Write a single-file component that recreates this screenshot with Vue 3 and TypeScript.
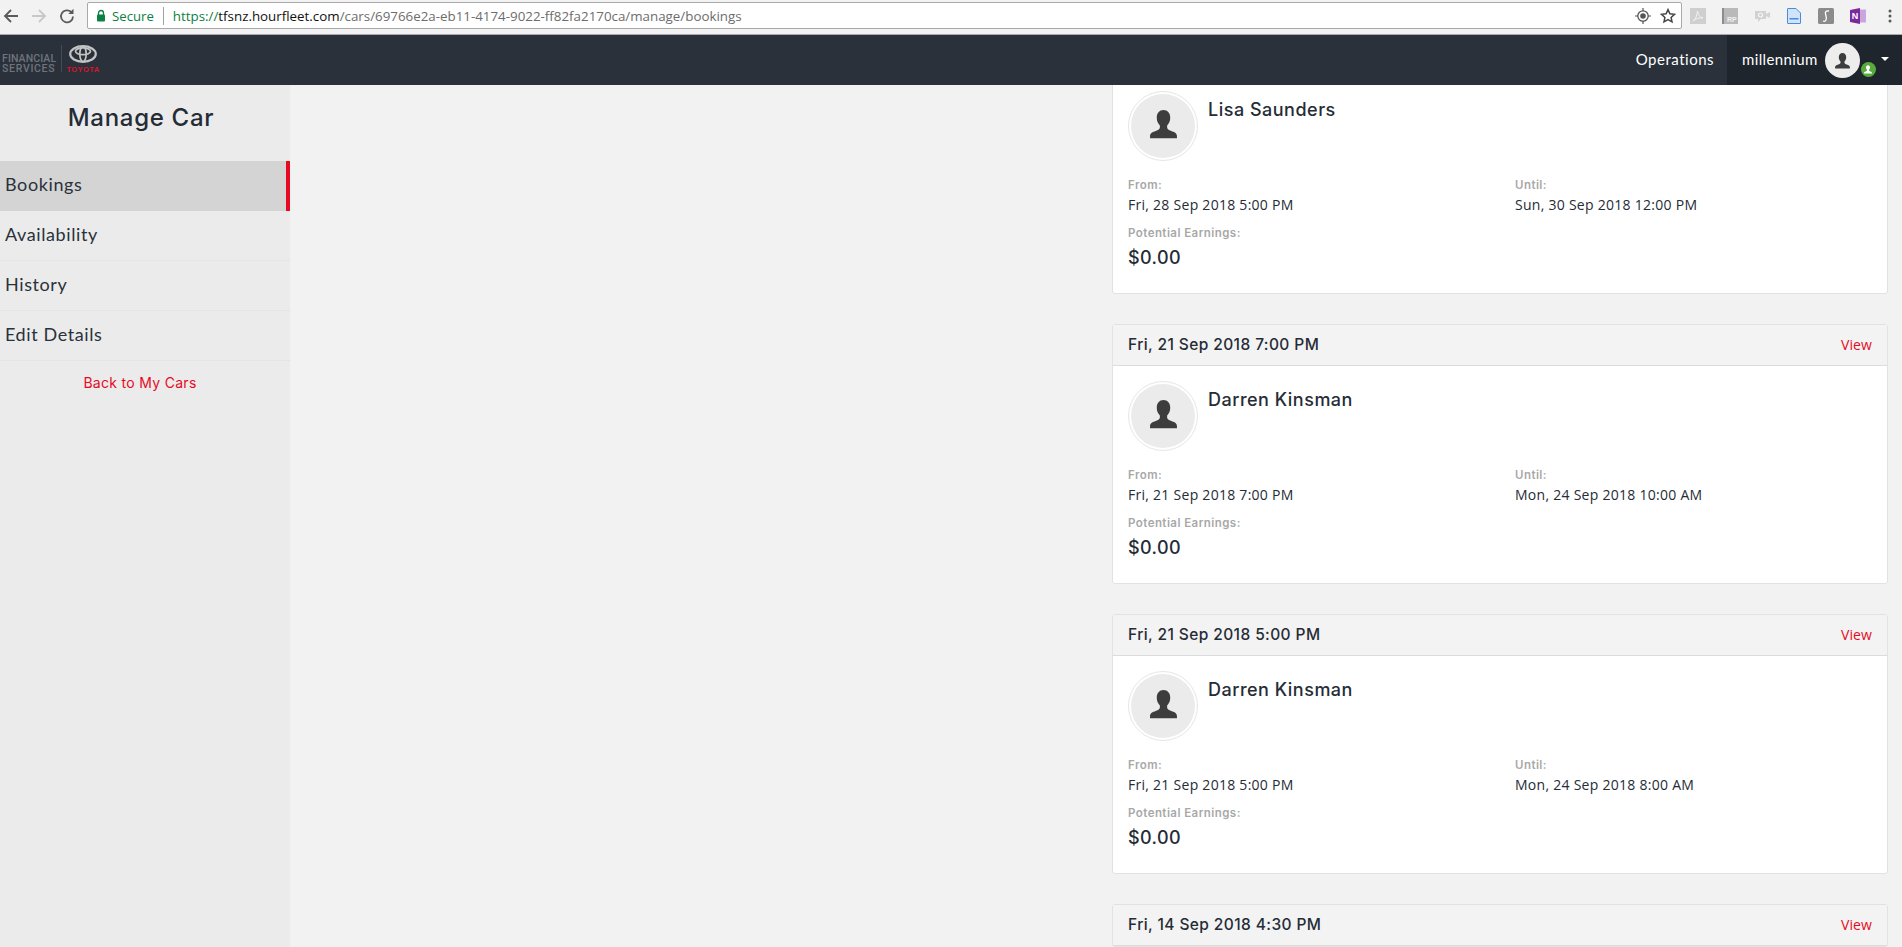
<script setup lang="ts">
interface Booking {
  id: number
  header?: string
  name?: string
  from?: string
  until?: string
}

const menu: string[] = ['Bookings', 'Availability', 'History', 'Edit Details']

const bookings: Booking[] = [
  { id: 1, name: 'Lisa Saunders', from: 'Fri, 28 Sep 2018 5:00 PM', until: 'Sun, 30 Sep 2018 12:00 PM' },
  { id: 2, header: 'Fri, 21 Sep 2018 7:00 PM', name: 'Darren Kinsman', from: 'Fri, 21 Sep 2018 7:00 PM', until: 'Mon, 24 Sep 2018 10:00 AM' },
  { id: 3, header: 'Fri, 21 Sep 2018 5:00 PM', name: 'Darren Kinsman', from: 'Fri, 21 Sep 2018 5:00 PM', until: 'Mon, 24 Sep 2018 8:00 AM' },
  { id: 4, header: 'Fri, 14 Sep 2018 4:30 PM' }
]

const personPath = 'M13 0c4 0 6.5 3 6.5 7.5 0 3-1 5.5-3 7.5v2c0 1.5 1.5 2.5 4 3.3 3 1 5.5 2 5.5 5v2H0v-2c0-3 2.5-4 5.5-5 2.5-.8 4-1.8 4-3.3v-2c-2-2-3-4.5-3-7.5C6.5 3 9 0 13 0z'
</script>

<template>
  <div class="page">
    <header class="chrome">
      <div class="nav-buttons">
        <svg class="ic" viewBox="0 0 16 16"><path d="M15 8H2M8 2L2 8l6 6" fill="none" stroke="#5a5a5a" stroke-width="1.8" /></svg>
        <svg class="ic" viewBox="0 0 16 16"><path d="M1 8h13M8 2l6 6-6 6" fill="none" stroke="#c8c8c8" stroke-width="1.8" /></svg>
        <svg class="ic" viewBox="0 0 16 16"><path d="M14 8.500a6 6 0 1 1-1.800-4.500" fill="none" stroke="#5a5a5a" stroke-width="1.800" /><path d="M14.500 .8v5.200H9.300z" fill="#5a5a5a" /></svg>
      </div>
      <div class="omnibox">
        <svg class="lock" viewBox="0 0 10 13"><path d="M2.500 6V4a2.500 2.500 0 0 1 5 0v2" fill="none" stroke="#0b8043" stroke-width="1.300" /><rect x="1" y="5.500" width="8" height="7" rx="1" fill="#0b8043" /></svg>
        <span class="secure">Secure</span>
        <span class="omni-divider"></span>
        <span class="url"><span class="scheme">https://</span><span class="host">tfsnz.hourfleet.com</span>/cars/69766e2a-eb11-4174-9022-ff82fa2170ca/manage/bookings</span>
        <span class="omni-actions">
          <svg class="ic" viewBox="0 0 16 16"><circle cx="8" cy="8" r="5.200" fill="none" stroke="#555" stroke-width="1.300" /><circle cx="8" cy="8" r="2.800" fill="#555" /><path d="M8 0v3M8 13v3M0 8h3M13 8h3" stroke="#555" stroke-width="1.200" /></svg>
          <svg class="ic" viewBox="0 0 16 16"><path d="M8 1.600l1.900 4.200 4.600.5-3.400 3.100.9 4.500L8 11.700l-4 2.200.9-4.500L1.500 6.300l4.600-.5z" fill="none" stroke="#444" stroke-width="1.500" /></svg>
        </span>
      </div>
      <div class="extensions">
        <svg class="ext" viewBox="0 0 16 16"><rect width="16" height="16" fill="#cfcfcf" /><path d="M3 13c3-2 4-6 4.500-10 .5 4 2 6 5.500 7-4-.5-7 .5-10 3z" fill="none" stroke="#f2f2f2" stroke-width="1" /></svg>
        <svg class="ext" viewBox="0 0 16 16"><rect width="16" height="16" fill="#b9b9b9" /><rect width="2" height="16" fill="#8d8d8d" /><text x="5" y="14" class="ext-text">RP</text></svg>
        <svg class="ext" viewBox="0 0 16 16"><path d="M1 3h11v8H7l-3 3v-3H1z" fill="#d2d2d2" /><path d="M12 6l4-2v6l-4-2z" fill="#d2d2d2" /><circle cx="6.500" cy="7" r="2" fill="none" stroke="#f6f6f6" stroke-width="1.200" /></svg>
        <svg class="ext" viewBox="0 0 16 16"><path d="M2 .5h8l4.500 4.500v10a.5.5 0 0 1-.5.5H2a.5.5 0 0 1-.5-.5V1a.5.5 0 0 1 .5-.5z" fill="#cfe3fa" stroke="#4a8ad8" /><rect x="3.500" y="10" width="9" height="1.500" fill="#4a8ad8" /></svg>
        <svg class="ext" viewBox="0 0 16 16"><rect width="16" height="16" rx="1.500" fill="#8b8b8b" /><path d="M11 3C8 2.500 7 4 7.500 6s1.500 4 .5 6-2 1.500-3 1" fill="none" stroke="#fff" stroke-width="1.300" /></svg>
        <svg class="ext" viewBox="0 0 16 16"><rect x="6" y="1.500" width="10" height="13" fill="#c9a6de" /><path d="M0 2l10-2v16L0 14z" fill="#7b2a9e" /><text x="1.800" y="11" class="ext-n">N</text></svg>
        <svg class="kebab" viewBox="0 0 4 16"><circle cx="2" cy="3" r="1.500" fill="#5a5a5a" /><circle cx="2" cy="8" r="1.500" fill="#5a5a5a" /><circle cx="2" cy="13" r="1.500" fill="#5a5a5a" /></svg>
      </div>
    </header>

    <nav class="topnav">
      <div class="brand">
        <div class="brand-words">
          <span class="word-a">FINANCIAL</span>
          <span class="word-b">SERVICES</span>
        </div>
        <span class="brand-divider"></span>
        <div class="brand-mark">
          <svg class="emblem" viewBox="0 0 28 18">
            <g fill="none" stroke="#c4c4c4">
              <ellipse cx="14" cy="9" rx="12.800" ry="7.800" stroke-width="2.200" />
              <ellipse cx="14" cy="6.300" rx="7.500" ry="3.400" stroke-width="1.700" />
              <ellipse cx="14" cy="9" rx="3.200" ry="7.500" stroke-width="1.700" />
            </g>
          </svg>
          <span class="toyota">TOYOTA</span>
        </div>
      </div>
      <div class="nav-right">
        <a class="operations">Operations</a>
        <div class="user">
          <span class="username">millennium</span>
          <span class="user-avatar">
            <svg class="user-person" viewBox="0 0 26 28"><path :d="personPath" fill="#3d3d3d" /></svg>
            <span class="badge">
              <svg class="badge-person" viewBox="0 0 26 28"><path :d="personPath" fill="#fff" /></svg>
            </span>
          </span>
          <span class="caret"></span>
        </div>
      </div>
    </nav>

    <div class="main">
      <aside class="sidebar">
        <h1 class="side-title">Manage Car</h1>
        <ul class="side-menu">
          <li v-for="(item, i) in menu" :key="item" :class="['side-item', { active: i === 0 }]">{{ item }}</li>
        </ul>
        <a class="back">Back to My Cars</a>
      </aside>
      <section class="content">
        <div class="list">
          <article v-for="b in bookings" :key="b.id" class="card">
            <div v-if="b.header" class="card-head">
              <span class="head-date">{{ b.header }}</span>
              <a class="view">View</a>
            </div>
            <div v-if="b.name" class="card-body">
              <div class="who">
                <span class="avatar">
                  <span class="avatar-inner">
                    <svg class="person" viewBox="0 0 26 28"><path :d="personPath" fill="#3d3d3d" /></svg>
                  </span>
                </span>
                <span class="name">{{ b.name }}</span>
              </div>
              <div class="times">
                <div>
                  <div class="label">From:</div>
                  <div class="value">{{ b.from }}</div>
                </div>
                <div>
                  <div class="label">Until:</div>
                  <div class="value">{{ b.until }}</div>
                </div>
              </div>
              <div class="label earn-label">Potential Earnings:</div>
              <div class="amount">$0.00</div>
            </div>
          </article>
        </div>
      </section>
    </div>
  </div>
</template>

<style>
html, body { margin: 0; padding: 0; overflow: hidden; }
</style>

<style scoped>
.page {
  width: 1902px;
  height: 947px;
  display: flex;
  flex-direction: column;
  overflow: hidden;
  background: #f2f2f2;
  font-family: "Inter", "Liberation Sans", sans-serif;
  color: #252c36;
}
.chrome {
  height: 34px;
  flex: none;
  display: flex;
  align-items: center;
  background: #f2f2f2;
  border-bottom: 1px solid #a8a8a8;
  box-sizing: content-box;
}
.nav-buttons {
  width: 87px;
  flex: none;
  display: flex;
  align-items: center;
  padding-left: 3px;
  gap: 12px;
  box-sizing: border-box;
  margin-top: -3px;
}
.ic { width: 16px; height: 16px; flex: none; }
.omnibox {
  width: 1595px;
  height: 27px;
  flex: none;
  margin-top: -3px;
  display: flex;
  align-items: center;
  box-sizing: border-box;
  background: #fff;
  border: 1px solid #a9a9a9;
  border-radius: 2px;
  padding-left: 8px;
}
.lock { width: 10px; height: 13px; flex: none; }
.secure {
  margin-left: 6px;
  font: 13.2px "Open Sans", sans-serif;
  color: #0b8043;
}
.omni-divider {
  width: 1px;
  height: 18px;
  background: #a0a0a0;
  margin: 0 9px;
}
.url {
  font: 13.35px "Open Sans", sans-serif;
  color: #6d6d6d;
  white-space: nowrap;
}
.scheme { color: #0b8043; }
.host { color: #111; }
.omni-actions {
  margin-left: auto;
  margin-right: 5px;
  display: flex;
  gap: 9px;
}
.extensions {
  flex: 1;
  display: flex;
  align-items: center;
  padding-left: 8px;
  gap: 16px;
  margin-top: -3px;
}
.ext { width: 16px; height: 16px; flex: none; }
.ext-text { font: bold 7px "Liberation Sans", sans-serif; fill: #f2f2f2; }
.ext-n { font: bold 9px "Liberation Sans", sans-serif; fill: #fff; }
.kebab { width: 4px; height: 16px; margin-left: 6px; }
.topnav {
  height: 50px;
  flex: none;
  display: flex;
  justify-content: space-between;
  background: #2a313b;
}
.brand {
  display: flex;
  align-items: flex-start;
  padding: 10px 0 0 2px;
}
.brand-words {
  display: flex;
  flex-direction: column;
  margin-top: 9px;
  font: 500 10.5px/10px "Roboto", sans-serif;
  color: #6f747b;
  width: 54px;
}
.word-a { letter-spacing: 0.1px; }
.word-b { letter-spacing: 0.7px; }
.brand-divider {
  width: 1px;
  height: 27px;
  background: #454b54;
  margin: 0 4px 0 5px;
}
.brand-mark {
  display: flex;
  flex-direction: column;
  align-items: center;
  width: 34px;
}
.emblem { width: 28px; height: 18px; }
.toyota {
  margin-top: 3px;
  font: bold 7.5px/8px "Liberation Sans", sans-serif;
  color: #d8132a;
  letter-spacing: 0.4px;
}
.nav-right { display: flex; }
.operations {
  align-self: center;
  margin-right: 13px;
  font: 15px "Lato", sans-serif;
  color: #fff;
  letter-spacing: 0.5px;
  margin-top: -2px;
}
.user {
  width: 175px;
  box-sizing: border-box;
  background: #1e252c;
  display: flex;
  align-items: center;
  padding-left: 15px;
}
.username {
  font: 15px "Lato", sans-serif;
  color: #fff;
  letter-spacing: 0.38px;
  margin-top: -2px;
}
.user-avatar {
  width: 35px;
  height: 35px;
  margin-left: 7px;
  margin-top: 1px;
  border-radius: 50%;
  background: #ededed;
  display: flex;
  align-items: center;
  justify-content: center;
  position: relative;
}
.user-person { width: 15px; height: 16px; }
.badge {
  position: absolute;
  left: 36px;
  top: 19px;
  width: 15px;
  height: 15px;
  border-radius: 50%;
  background: #5aab3e;
  display: flex;
  align-items: center;
  justify-content: center;
}
.badge-person { width: 8px; height: 9px; }
.caret {
  width: 0;
  height: 0;
  margin-left: 21px;
  margin-top: -2px;
  border-left: 4px solid transparent;
  border-right: 4px solid transparent;
  border-top: 4px solid #fff;
}
.main {
  flex: 1;
  min-height: 0;
  display: flex;
  overflow: hidden;
}
.sidebar {
  width: 290px;
  flex: none;
  background: #ebebeb;
  display: flex;
  flex-direction: column;
}
.side-title {
  margin: 18px 0 0;
  height: 58px;
  padding-right: 8px;
  text-align: center;
  font-size: 24px;
  line-height: 30px;
  font-weight: 500;
  letter-spacing: 0.7px;
  color: #252c36;
}
.side-menu {
  list-style: none;
  margin: 0;
  padding: 0;
}
.side-item {
  height: 50px;
  box-sizing: border-box;
  padding-left: 5px;
  font: 18px/47px "Lato", sans-serif;
  color: #2a313b;
  border-bottom: 1px solid #e4e4e4;
  letter-spacing: 0.6px;
}
.side-item.active {
  background: #d4d4d4;
  border-bottom: 0;
  border-right: 4px solid #e60a24;
}
.back {
  margin-top: 12px;
  padding-right: 10px;
  text-align: center;
  font-size: 14px;
  line-height: 20px;
  letter-spacing: 0.3px;
  color: #e60a24;
}
.content {
  flex: 1;
  min-width: 0;
  padding-left: 822px;
  padding-right: 14px;
}
.list {
  display: flex;
  flex-direction: column;
  gap: 30px;
  margin-top: -10px;
}
.card {
  flex: none;
  background: #fff;
  border: 1px solid #e2e2e2;
  border-radius: 3px;
}
.card-head {
  height: 41px;
  box-sizing: border-box;
  display: flex;
  align-items: center;
  justify-content: space-between;
  padding: 0 15px 2px;
  background: #f3f3f3;
  border-bottom: 1px solid #dcdcdc;
}
.head-date {
  font-size: 15.5px;
  font-weight: 500;
  letter-spacing: 0.4px;
  color: #252c36;
}
.view {
  font: 14px "Open Sans", sans-serif;
  letter-spacing: 0.1px;
  color: #e60a24;
}
.card-body {
  height: 217px;
  box-sizing: border-box;
  padding: 15px;
}
.who {
  display: flex;
  gap: 10px;
}
.avatar {
  width: 70px;
  height: 70px;
  box-sizing: border-box;
  border: 1px solid #e6e6e6;
  border-radius: 50%;
  padding: 2px;
  flex: none;
}
.avatar-inner {
  display: flex;
  width: 100%;
  height: 100%;
  border-radius: 50%;
  background: #ebebeb;
  align-items: center;
  justify-content: center;
}
.person { width: 27px; height: 29px; margin-top: -3px; }
.name {
  font-size: 18px;
  line-height: 22px;
  font-weight: 500;
  letter-spacing: 0.5px;
  color: #252c36;
  margin-top: 8px;
}
.times {
  display: grid;
  grid-template-columns: 387px 1fr;
  margin-top: 16px;
}
.label {
  font-size: 11.5px;
  line-height: 16px;
  font-weight: 600;
  letter-spacing: 0.45px;
  color: #a8a8a8;
}
.value {
  font: 14px/18px "Open Sans", sans-serif;
  letter-spacing: 0.27px;
  color: #252c36;
  margin-top: 3px;
}
.earn-label { margin-top: 11px; }
.amount {
  font-size: 18px;
  line-height: 24px;
  font-weight: 500;
  letter-spacing: 0.4px;
  color: #252c36;
  margin-top: 5px;
}
</style>
